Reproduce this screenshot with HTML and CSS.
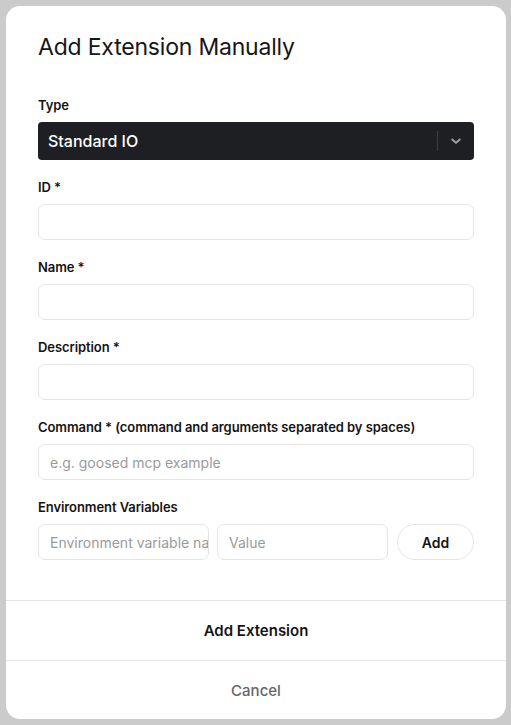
FILE: index.html
```html
<!DOCTYPE html>
<html>
<head>
<meta charset="utf-8">
<link rel="stylesheet" href="styles.css">
</head>
<body>
<div class="backdrop">
  <div class="modal">
    <div class="body">
      <h1 class="title">Add Extension Manually</h1>
      <div class="field">
        <div class="label">Type</div>
        <div class="select">
          <span class="select-value">Standard IO</span>
          <span class="select-sep"></span>
          <span class="select-chev">
            <svg width="18" height="18" viewBox="0 0 24 24" fill="none" stroke="#a1a1aa" stroke-width="2.6" stroke-linecap="round" stroke-linejoin="round"><path d="M7 10l5 4.5 5-4.5"/></svg>
          </span>
        </div>
      </div>
      <div class="field">
        <div class="label">ID *</div>
        <div class="input"></div>
      </div>
      <div class="field">
        <div class="label">Name *</div>
        <div class="input"></div>
      </div>
      <div class="field">
        <div class="label">Description *</div>
        <div class="input"></div>
      </div>
      <div class="field">
        <div class="label">Command * (command and arguments separated by spaces)</div>
        <div class="input"><span class="ph">e.g. goosed mcp example</span></div>
      </div>
      <div class="field">
        <div class="label">Environment Variables</div>
        <div class="env-row">
          <div class="input env-in"><span class="ph">Environment variable name</span></div>
          <div class="input env-in"><span class="ph">Value</span></div>
          <div class="add-btn">Add</div>
        </div>
      </div>
    </div>
    <div class="footer">
      <div class="foot-btn primary">Add Extension</div>
      <div class="foot-btn cancel">Cancel</div>
    </div>
  </div>
</div>
</body>
</html>
```
FILE: styles.css
```css
* { box-sizing: border-box; }
html, body { margin: 0; padding: 0; }
body {
  font-family: Inter, "Noto Sans", "Liberation Sans", sans-serif;
  background: #cbcbcb;
  color: #141414;
}
.backdrop {
  width: 511px;
  height: 725px;
  padding: 6px 5px 6px 6px;
  background: #cbcbcb;
}
.modal {
  background: #fff;
  border-radius: 14px;
  height: 713px;
  display: flex;
  flex-direction: column;
  overflow: hidden;
}
.body {
  padding: 26px 32px 0 32px;
  flex: 1;
}
.title {
  margin: 0 0 34px 0;
  font-size: 23px;
  line-height: 30px;
  font-weight: 400;
  letter-spacing: -0.2px;
  color: #161616;
}
.field { margin-bottom: 18px; }
.label {
  font-size: 13px;
  line-height: 18px;
  font-weight: 600;
  letter-spacing: -0.08px;
  margin-bottom: 8px;
  color: #141414;
}
.select {
  height: 38px;
  background: #1e1f23;
  border-radius: 4px;
  display: flex;
  align-items: center;
  padding-left: 10px;
}
.select-value {
  flex: 1;
  color: #fff;
  font-size: 16px;
  font-weight: 500;
}
.select-sep {
  width: 1px;
  height: 20px;
  background: #3d3e44;
}
.select-chev {
  width: 36px;
  display: flex;
  justify-content: center;
  align-items: center;
}
.input {
  height: 36px;
  border: 1px solid #e5e5e5;
  border-radius: 7px;
  display: flex;
  align-items: center;
  padding: 0 11px;
  overflow: hidden;
  white-space: nowrap;
}
.ph {
  font-size: 14px;
  color: #9a9a9a;
}
.env-row {
  display: flex;
  gap: 8px;
}
.env-in { width: 171px; }
.add-btn {
  margin-left: 1px;
  width: 77px;
  height: 36px;
  border: 1px solid #e5e5e5;
  border-radius: 18px;
  display: flex;
  align-items: center;
  justify-content: center;
  font-size: 14px;
  font-weight: 600;
  color: #141414;
}
.footer { display: flex; flex-direction: column; }
.foot-btn {
  height: 60px;
  border-top: 1px solid #e5e5e5;
  display: flex;
  align-items: center;
  justify-content: center;
  font-size: 15px;
  font-weight: 600;
}
.primary { color: #141414; }
.cancel { color: #666; font-weight: 500; height: 59px; }
```
